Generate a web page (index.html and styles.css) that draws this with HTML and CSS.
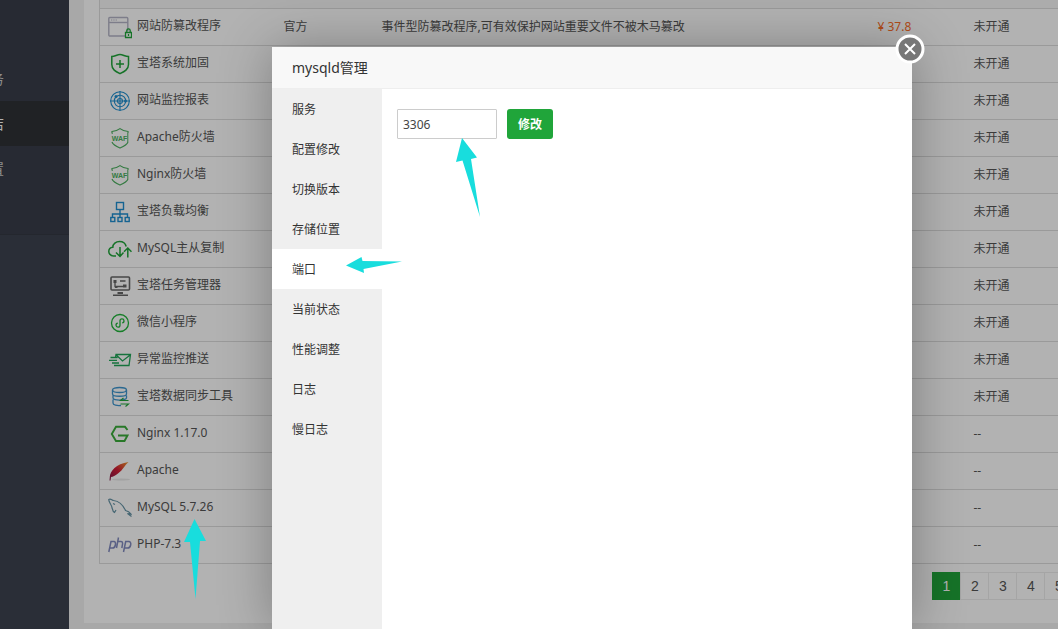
FILE: index.html
```html
<!DOCTYPE html>
<html lang="zh-CN">
<head>
<meta charset="utf-8">
<title>mysqld管理</title>
<link rel="stylesheet" href="styles.css">
</head>
<body>
<div class="app">
  <nav class="sidebar">
    <div class="menu">
      <a class="menu-item" href="#"><span>计划任务</span></a>
      <a class="menu-item active" href="#"><span>软件商店</span></a>
      <a class="menu-item" href="#"><span>面板设置</span></a>
    </div>
  </nav>
  <main class="main">
    <section class="panel">
      <table class="soft">
        <colgroup><col class="c-name"><col class="c-dev"><col class="c-desc"><col class="c-price"><col class="c-state"></colgroup>
        <thead><tr><th colspan="5"></th></tr></thead>
        <tbody>
        <tr><td><div class="name"><svg class="icon" viewBox="0 0 24 24"><g fill="none" stroke="#b4b4c6"><rect x=".8" y="2.500" width="19" height="18.500" rx="1" stroke-width="1.400"/><path d="M1 7.500H20" stroke-width="1.400"/><path d="M3 5H9" stroke-dasharray="1.300 1"/></g><rect x="17" y="16" width="7.500" height="8" fill="#fff"/><path d="M17.500 17.500H23.500V22.500H17.500ZM18.800 17.500V15.500a1.700 1.700 0 0 1 3.400 0V17.500M20.500 19V21" fill="none" stroke="#20a53a" stroke-width="1.300"/></svg><span>网站防篡改程序</span></div></td><td>官方</td><td>事件型防篡改程序,可有效保护网站重要文件不被木马篡改</td><td class="price">¥ 37.8</td><td>未开通</td></tr>
        <tr><td><div class="name"><svg class="icon" viewBox="0 0 24 24"><g fill="none" stroke="#20a53a" stroke-width="1.500"><path d="M3.800 4.500C7 4.500 9 2.500 12 2.500S17 4.500 20.500 4.500V12.500C20.500 17.500 16.500 19.500 12 21.700C7.500 19.500 3.800 17.500 3.800 12.500Z"/><path d="M8 12H16M12 8V16"/></g></svg><span>宝塔系统加固</span></div></td><td></td><td></td><td></td><td>未开通</td></tr>
        <tr><td><div class="name"><svg class="icon" viewBox="0 0 24 24"><g fill="none" stroke="#1f8fd0" stroke-width="1.100"><circle cx="12" cy="12" r="9.300"/><circle cx="12" cy="12" r="5.700"/><circle cx="12" cy="12" r="2.500"/><path d="M2 12H22M12 2V22"/></g><circle cx="8" cy="7.500" r="1.500" fill="#1f8fd0"/><circle cx="17.500" cy="12" r="1.500" fill="#1f8fd0"/></svg><span>网站监控报表</span></div></td><td></td><td></td><td></td><td>未开通</td></tr>
        <tr><td><div class="name"><svg class="icon" viewBox="0 0 24 24"><path d="M4 7V5.500Q9 5 12 2.600Q15 5 20 5.500V7M4 16C5 19 8.500 20.500 12 22C15.500 20.500 19 19 20 16" fill="none" stroke="#4cb05f" stroke-width="1.200"/><path d="M19.800 7V16M4.200 7V8" stroke="#4cb05f"/><text class="waf" x="11.500" y="15" text-anchor="middle">WAF</text></svg><span>Apache防火墙</span></div></td><td></td><td></td><td></td><td>未开通</td></tr>
        <tr><td><div class="name"><svg class="icon" viewBox="0 0 24 24"><path d="M4 7V5.500Q9 5 12 2.600Q15 5 20 5.500V7M4 16C5 19 8.500 20.500 12 22C15.500 20.500 19 19 20 16" fill="none" stroke="#4cb05f" stroke-width="1.200"/><path d="M19.800 7V16M4.200 7V8" stroke="#4cb05f"/><text class="waf" x="11.500" y="15" text-anchor="middle">WAF</text></svg><span>Nginx防火墙</span></div></td><td></td><td></td><td></td><td>未开通</td></tr>
        <tr><td><div class="name"><svg class="icon" viewBox="0 0 24 24"><g fill="none" stroke="#1f8fd0" stroke-width="1.400"><rect x="8.500" y="2.500" width="7" height="7"/><path d="M12 9.500V17M4.500 17V14H19.500V17"/><rect x="2.800" y="17.500" width="4" height="4"/><rect x="10" y="17.500" width="4" height="4"/><rect x="17.200" y="17.500" width="4" height="4"/></g></svg><span>宝塔负载均衡</span></div></td><td></td><td></td><td></td><td>未开通</td></tr>
        <tr><td><div class="name"><svg class="icon" viewBox="0 0 24 24"><g fill="none" stroke="#20a53a" stroke-width="1.500"><path d="M8 19H5.500C2 19 .8 16 .8 14.500C.8 12 2.800 10.400 4.800 10.200C4.800 7 8 4.500 11.500 4.500C15 4.500 17.500 6.500 18.200 9.500"/><path d="M12 10V19.500M8 15.500L12 19.500L15.500 15.500M19.800 20.500V11M16 14.800L19.800 11L23.500 14.800"/></g></svg><span>MySQL主从复制</span></div></td><td></td><td></td><td></td><td>未开通</td></tr>
        <tr><td><div class="name"><svg class="icon" viewBox="0 0 24 24"><g fill="none" stroke="#666" stroke-width="1.600"><rect x="3" y="3" width="18.500" height="13" rx="1"/><path d="M7 7V12.500H15M12 7H17.500" stroke-width="1.300"/></g><path d="M5.500 6h3v3h-3zM15 10.500h3.500v3H15zM7 12h2.500v2H7zM9.500 18h5.500v2H9.500zM5 20.500h15v1.500H5z" fill="#666"/></svg><span>宝塔任务管理器</span></div></td><td></td><td></td><td></td><td>未开通</td></tr>
        <tr><td><div class="name"><svg class="icon" viewBox="0 0 24 24"><g fill="none" stroke="#20b53a" stroke-width="1.300"><circle cx="12" cy="12" r="8.500"/><path d="M9.800 12.200A2 2 0 1 0 12 14.200V9.800A2 2 0 1 1 14.200 11.800"/></g></svg><span>微信小程序</span></div></td><td></td><td></td><td></td><td>未开通</td></tr>
        <tr><td><div class="name"><svg class="icon" viewBox="0 0 24 24"><g fill="none" stroke="#20a558" stroke-width="1.300"><path d="M7.500 9.500L8 6.500H22.500L21 17.500H8M8 6.800L14.500 13L22.500 6.800M2.500 9.500H9.500M1 12.300H9M4 15H11M6 17.500H9"/></g></svg><span>异常监控推送</span></div></td><td></td><td></td><td></td><td>未开通</td></tr>
        <tr><td><div class="name"><svg class="icon" viewBox="0 0 24 24"><g fill="none" stroke="#3e96cf" stroke-width="1.300"><ellipse cx="11.500" cy="5" rx="7" ry="2.500"/><path d="M4.500 5V9C4.500 12 18.500 12 18.500 9V5M5 10.500V13C5 16 18 15.500 18.500 13M5 14.500V18C5 20 9 21 13 20.500M18.500 10.500V13"/></g><path d="M20.500 15.500H12.500L15.500 13M12.500 19H20.500L17.500 21.500" fill="none" stroke="#20a53a" stroke-width="1.100"/></svg><span>宝塔数据同步工具</span></div></td><td></td><td></td><td></td><td>未开通</td></tr>
        <tr><td><div class="name"><svg class="icon" viewBox="0 0 24 24"><path d="M19.500 8L17 4.800H8L3.800 12L8 19H16.500L19.500 13.500H10" fill="none" stroke="#3aac3a" stroke-width="1.900"/></svg><span>Nginx 1.17.0</span></div></td><td></td><td></td><td></td><td>--</td></tr>
        <tr><td><div class="name"><svg class="icon" viewBox="0 0 24 24"><defs><linearGradient id="feather" x1="0" y1="1" x2="1" y2="0"><stop offset="0" stop-color="#7b1648"/><stop offset=".5" stop-color="#d31c35"/><stop offset="1" stop-color="#ed9a2e"/></linearGradient></defs><ellipse cx="13" cy="20.500" rx="9" ry="1" fill="#e8e8e8"/><path d="M1.800 18C2 12 8 5 20.500 3C17 6 15 11 10 14.500C7 16.500 5 18 3 18L2.500 21.500H1.500Z" fill="url(#feather)"/></svg><span>Apache</span></div></td><td></td><td></td><td></td><td>--</td></tr>
        <tr><td><div class="name"><svg class="icon" viewBox="0 0 24 24"><path d="M8 14L6.500 16.500C4 15.500 4.500 11 3 9C2 7 .5 5 .8 3.500C2.500 2.500 4 4 5.500 4.500C11 5 15 9 17.500 14.500C20 15 21.500 16 23 18L19.500 17.500L23.500 20.500M5 7.500L7 8.500" fill="none" stroke="#6593a5" stroke-width="1.200"/></svg><span>MySQL 5.7.26</span></div></td><td></td><td></td><td></td><td>--</td></tr>
        <tr><td><div class="name"><svg class="icon" viewBox="0 0 24 24"><g fill="none" stroke="#828bbf" stroke-width="1.500"><path d="M.8 19L3 8.500H6C8.500 8.500 7.800 15 4.500 15H1.800M8.500 15L10.500 4.500M9.800 8.500H13C15.500 8.500 14.500 11.500 13.800 15M15.500 19L17.700 8.500H20.700C24.200 8.500 23 15 19.500 15H16.500"/></g></svg><span>PHP-7.3</span></div></td><td></td><td></td><td></td><td>--</td></tr>
        </tbody>
      </table>
      <div class="pager">
        <span class="page current">1</span><a class="page" href="#">2</a><a class="page" href="#">3</a><a class="page" href="#">4</a><a class="page" href="#">5</a>
      </div>
    </section>
  </main>
</div>
<div class="shade"></div>
<div class="modal" role="dialog" aria-labelledby="title">
  <h1 class="modal-title" id="title">mysqld管理</h1>
  <div class="modal-body">
    <nav class="tabs">
      <a class="tab" href="#">服务</a>
      <a class="tab" href="#">配置修改</a>
      <a class="tab" href="#">切换版本</a>
      <a class="tab" href="#">存储位置</a>
      <a class="tab on" href="#">端口</a>
      <a class="tab" href="#">当前状态</a>
      <a class="tab" href="#">性能调整</a>
      <a class="tab" href="#">日志</a>
      <a class="tab" href="#">慢日志</a>
    </nav>
    <form class="port">
      <input class="port-input" type="text" value="3306" aria-label="端口">
      <button class="port-save" type="button">修改</button>
    </form>
  </div>
  <button class="close" type="button" aria-label="关闭"><svg viewBox="0 0 30 30"><circle cx="15" cy="15" r="13" fill="#777" stroke="#fff" stroke-width="3"/><path d="M10 10L20 20M20 10L10 20" stroke="#fff" stroke-width="2"/></svg></button>
</div>
<svg class="arrows" viewBox="0 0 1058 629"><path d="M462 138L477 157.500L471 159L480 217L462.500 160.500L456 162ZM346 265.500L361.500 257L362.500 261L402 261.500L363.500 269L364 273ZM194.500 519L206 541H200L195.500 599L190 542H184Z"/></svg>
</body>
</html>
```

FILE: styles.css
```css
* { box-sizing: border-box; }
body {
  margin: 0;
  height: 100vh;
  overflow: hidden;
  position: relative;
  background: #f1f1f1;
  color: #555;
  font: 12px/18px "Noto Sans", "Noto Sans CJK SC", sans-serif;
}
a { color: inherit; text-decoration: none; }
.app { display: flex; min-height: 100vh; }

.sidebar { flex: 0 0 69px; background: #3d4350; overflow: hidden; }
.menu { height: 235px; padding-top: 56px; background: #383d49; border-bottom: 1px solid #343943; }
.menu-item { display: block; height: 45px; font-size: 14px; line-height: 46px; color: #ccc; white-space: nowrap; }
.menu-item span { margin-left: -52px; }
.menu-item.active { background: #2e3236; color: #fff; }

.main { flex: 1; min-width: 0; padding: 0 0 6px 15px; overflow: hidden; }
.panel { background: #fff; padding: 0 0 23px 15px; overflow: hidden; }
.soft { table-layout: fixed; width: 1120px; border-collapse: collapse; border: 1px solid #ddd; border-top: 0; }
.c-name { width: 176px; }
.c-dev { width: 98px; }
.c-desc { width: 496px; }
.c-price { width: 96px; }
.soft th { height: 8px; padding: 0; background: #f6f6f6; }
.soft td { height: 37px; padding: 0 8px; border-top: 1px solid #ddd; white-space: nowrap; }
.name { display: flex; align-items: center; gap: 5px; }
.name span { padding-bottom: 2px; }
.icon { width: 24px; height: 24px; flex: none; }
.waf { font: bold 7px "Liberation Sans", sans-serif; fill: #4cb05f; }
.soft .price { color: #fc6d26; }

.pager { display: flex; margin: 8px 0 0 833px; font: 14px/26px "Liberation Sans", sans-serif; }
.page { flex: 0 0 29px; height: 28px; margin-right: -1px; padding-left: 1px; border: 1px solid #ececec; text-align: center; }
.page.current { flex-basis: 28px; margin-right: 0; background: #20a53a; border-color: #20a53a; color: #fff; }

.shade { position: absolute; inset: 0; background: rgba(0, 0, 0, .3); }
.modal {
  position: absolute;
  top: 47px;
  bottom: 0;
  left: 50%;
  width: 640px;
  margin-left: -257px;
  display: flex;
  flex-direction: column;
  background: #fff;
  box-shadow: 1px 1px 50px rgba(0, 0, 0, .3);
  color: #333;
}
.modal-title { margin: 0; padding: 0 20px; background: #f8f8f8; border-bottom: 1px solid #eee; font-size: 14px; font-weight: 400; line-height: 41px; }
.modal-body { flex: 1; display: flex; }
.tabs { flex: 0 0 110px; background: #efefef; }
.tab { display: block; height: 40px; padding-left: 20px; line-height: 42px; }
.tab.on { background: #fff; }
.port { display: flex; align-items: flex-start; gap: 10px; padding: 20px 15px; }
.port-input { width: 100px; height: 30px; padding: 0 5px; border: 1px solid #ccc; border-radius: 1px; font: inherit; color: #444; }
.port-save { width: 46px; height: 30px; padding: 2px 0 0; border: 0; border-radius: 3px; background: #20a53a; color: #fff; font: inherit; font-weight: 700; }
.close { position: absolute; top: -13px; right: -13px; width: 30px; height: 30px; padding: 0; border: 0; background: none; }
.close svg { display: block; }

.arrows { position: absolute; top: 0; left: 0; width: 1058px; height: 629px; fill: #18dddd; pointer-events: none; }
```
